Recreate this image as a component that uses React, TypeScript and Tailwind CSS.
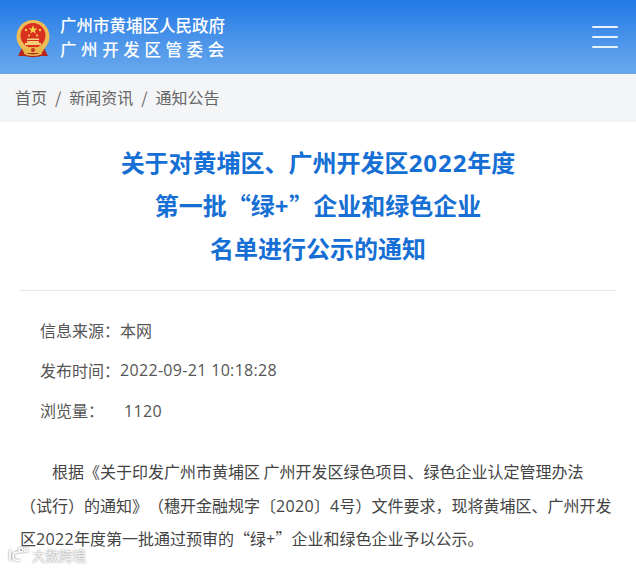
function Latin({ children, title }: { children: string; title?: boolean }) {
  return (
    <span className={`font-['Open_Sans',sans-serif] leading-none ${title ? "tracking-[0.04em]" : "tracking-[0.02em]"}`}>
      {children}
    </span>
  );
}

function Emblem() {
  return (
    <svg width="34" height="38" viewBox="0 0 34 38" className="mt-[3px] shrink-0">
      <path d="M6 28 L2 36 L9 36 C13 37.5 21 37.5 25 36 L32 36 L28 28 Z" fill="#b4251c" />
      <path d="M8 33 C13 36 21 36 26 33" fill="none" stroke="#e8b84a" strokeWidth="1.5" />
      <circle cx="17" cy="16.5" r="16.5" fill="#eebc55" />
      <circle cx="17" cy="15.5" r="12.5" fill="#d9301f" />
      <polygon points="17,5 18.2,8.4 21.6,8.4 18.8,10.5 19.9,13.8 17,11.8 14.1,13.8 15.2,10.5 12.4,8.4 15.8,8.4" fill="#f6d04d" />
      <circle cx="10" cy="10" r="1.2" fill="#f6d04d" />
      <circle cx="24" cy="10" r="1.2" fill="#f6d04d" />
      <circle cx="13" cy="15.5" r="1.1" fill="#f6d04d" />
      <circle cx="21" cy="15.5" r="1.1" fill="#f6d04d" />
      <path d="M11 20 H23 V18.5 H11 Z M9 25 H25 V23 H23 V21 H11 V23 H9 Z" fill="#f3cf7a" />
      <path d="M6 30 C11 26 23 26 28 30 L25 33 H9 Z" fill="#e8b84a" />
      <circle cx="17" cy="30" r="2" fill="#c8321f" />
    </svg>
  );
}

function MenuIcon() {
  return (
    <div className="flex w-[26px] flex-col gap-2">
      <span className="h-0.5 rounded-full bg-[#e8f3ff]" />
      <span className="h-0.5 rounded-full bg-[#e8f3ff]" />
      <span className="h-0.5 rounded-full bg-[#e8f3ff]" />
    </div>
  );
}

export default function App() {
  return (
    <div className="relative h-[568px] w-[636px] overflow-hidden bg-white font-['Noto_Sans_CJK_SC','Liberation_Sans',sans-serif]">
      <header className="flex h-[74px] items-center justify-between bg-gradient-to-b from-[#2079e6] to-[#69a9ec] pl-4 pr-[18px]">
        <div className="flex items-center gap-[10px]">
          <Emblem />
          <div className="font-medium text-white">
            <div className="text-[16.5px] leading-[22px]">广州市黄埔区人民政府</div>
            <div className="mt-[2px] text-[16.5px] leading-[22px] tracking-[4.6px]">广州开发区管委会</div>
          </div>
        </div>
        <MenuIcon />
      </header>

      <nav className="flex h-[48px] items-center gap-2 bg-[#f4f5f7] px-[15px] pb-[2px] text-[16px] text-[#666]">
        <span>首页</span>
        <span>/</span>
        <span>新闻资讯</span>
        <span>/</span>
        <span>通知公告</span>
      </nav>

      <main className="px-5">
        <h1 className="border-b border-[#e5e5e5] pb-[21px] pt-[18px] text-center text-[24px] font-bold leading-[43px] text-[#166fd4]">
          关于对黄埔区、广州开发区<Latin title>2022</Latin>年度
          <br />
          第一批“绿<Latin title>+</Latin>”企业和绿色企业
          <br />
          名单进行公示的通知
        </h1>

        <div className="px-5 pt-[19px]">
          <div className="flex h-10 items-center text-[16px] text-[#555]">
            <span>信息来源：</span>
            <span>本网</span>
          </div>
          <div className="flex h-10 items-center text-[16px] text-[#555]">
            <span>发布时间：</span>
            <Latin>2022-09-21 10:18:28</Latin>
          </div>
          <div className="flex h-10 items-center text-[16px] text-[#555]">
            <span>浏览量：</span>
            <span className="ml-5">
              <Latin>1120</Latin>
            </span>
          </div>
        </div>

        <p className="mt-[25px] w-[594px] indent-8 text-[16px] leading-[33.5px] text-[#444] [text-spacing-trim:space-all]">
          根据《关于印发广州市黄埔区 广州开发区绿色项目、绿色企业认定管理办法（试行）的通知》（穗开金融规字〔<Latin>2020</Latin>〕<Latin>4</Latin>号）文件要求，现将黄埔区、广州开发区<Latin>2022</Latin>年度第一批通过预审的“绿<Latin>+</Latin>”企业和绿色企业予以公示。
        </p>
      </main>

      <div className="absolute bottom-[5px] left-[8px] flex items-center gap-[4px] text-[13.5px] leading-4 text-white/85 [text-shadow:0_0_2px_#777]">
        <svg width="20" height="16" viewBox="0 0 20 16" fill="none" stroke="#fff" strokeWidth="1.6" className="drop-shadow-[0_0_1px_#777]">
          <path d="M2 3 V14" />
          <path d="M11 5 C7 5 5 7 5 10 C5 13 8 14 12 13" />
          <circle cx="13" cy="3" r="2" />
          <circle cx="18" cy="3" r="1.5" />
        </svg>
        <span>大数跨境</span>
      </div>
    </div>
  );
}
